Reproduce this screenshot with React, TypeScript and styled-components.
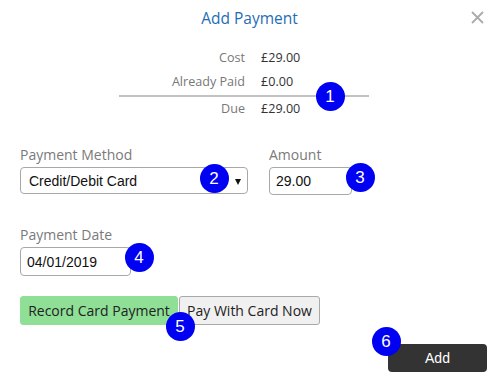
import React from "react";
import styled, { createGlobalStyle } from "styled-components";

const GlobalStyle = createGlobalStyle`
  html, body { margin: 0; padding: 0; background: #ffffff; }
  body { font-family: "Open Sans", "Liberation Sans", sans-serif; }
  * { box-sizing: border-box; }
`;

const Dialog = styled.div`
  position: relative;
  width: 499px;
  height: 382px;
  padding: 8px 12px 0 20px;
  display: flex;
  flex-direction: column;
  background: #ffffff;
`;

const Header = styled.header`
  display: flex;
  justify-content: center;
  margin: 0 -12px 0 -20px;
  height: 20px;
`;

const Title = styled.h2`
  margin: 0;
  font-size: 15.5px;
  line-height: 20px;
  font-weight: 400;
  color: #1f6db5;
`;

const CloseButton = styled.button`
  position: absolute;
  top: 11px;
  right: 15px;
  width: 13px;
  height: 13px;
  padding: 0;
  border: 0;
  background: transparent;
  display: flex;
  cursor: pointer;
`;

const Summary = styled.div`
  position: relative;
  width: 250px;
  margin: 18px 0 0 99px;
`;

const SummaryRow = styled.div`
  display: grid;
  grid-template-columns: 126px 1fr;
  column-gap: 16px;
  font-size: 12.6px;
  line-height: 24px;
`;

const Term = styled.span`
  text-align: right;
  color: #777777;
`;

const Value = styled.span`
  color: #333333;
`;

const Divider = styled.div`
  height: 2px;
  margin-top: 1px;
  background: #c2c2c2;
`;

const Badge = styled.span<{ $x: number; $y: number }>`
  position: absolute;
  left: ${(p) => p.$x}px;
  top: ${(p) => p.$y}px;
  width: 29px;
  height: 29px;
  margin: -14.5px 0 0 -14.5px;
  border-radius: 50%;
  background: #0000f2;
  color: #ffffff;
  font-family: "Liberation Sans", Arial, sans-serif;
  font-size: 17px;
  line-height: 29px;
  text-align: center;
  z-index: 2;
  pointer-events: none;
`;

const FormRow = styled.div<{ $top: number }>`
  display: flex;
  gap: 21px;
  margin-top: ${(p) => p.$top}px;
`;

const Field = styled.div`
  position: relative;
  display: flex;
  flex-direction: column;
  gap: 3px;
`;

const Label = styled.label`
  font-size: 14px;
  line-height: 19px;
  color: #7a7a7a;
`;

const SelectWrap = styled.div`
  position: relative;
  width: 228px;
  height: 27px;

  &::after {
    content: "";
    position: absolute;
    right: 7px;
    top: 12px;
    border-left: 3.5px solid transparent;
    border-right: 3.5px solid transparent;
    border-top: 6px solid #111111;
    pointer-events: none;
  }
`;

const Select = styled.select`
  appearance: none;
  -webkit-appearance: none;
  width: 100%;
  height: 100%;
  margin: 0;
  padding: 0 8px;
  border: 1px solid #a8a8a8;
  border-radius: 4px;
  background: #ffffff;
  color: #111111;
  font-family: "Liberation Sans", Arial, sans-serif;
  font-size: 14px;
`;

const TextInput = styled.input<{ $w: number; $h: number }>`
  width: ${(p) => p.$w}px;
  height: ${(p) => p.$h}px;
  margin: 0;
  padding: 0 6px;
  border: 1px solid #a8a8a8;
  border-radius: 4px;
  background: #ffffff;
  color: #111111;
  font-family: "Liberation Sans", Arial, sans-serif;
  font-size: 14px;
  outline: none;
`;

const ButtonGroup = styled.div`
  position: relative;
  display: flex;
  gap: 1px;
  margin-top: 20px;
`;

const ToggleButton = styled.button<{ $active?: boolean; $w: number }>`
  width: ${(p) => p.$w}px;
  height: 29px;
  margin: 0;
  padding: 0;
  border: 1px solid ${(p) => (p.$active ? "#8fdf97" : "#a9a9a9")};
  border-radius: 3px;
  background: ${(p) => (p.$active ? "#8fdf97" : "#f0f0f0")};
  color: #222222;
  font-family: "Open Sans", "Liberation Sans", sans-serif;
  font-size: 14px;
  line-height: 27px;
  text-align: center;
  white-space: nowrap;
  cursor: pointer;
`;

const Footer = styled.div`
  position: relative;
  display: flex;
  justify-content: flex-end;
  margin-top: 19px;
`;

const AddButton = styled.button`
  width: 99px;
  height: 28px;
  margin: 0;
  padding: 0;
  border: 0;
  border-radius: 4px;
  background: #333333;
  color: #ffffff;
  font-family: "Liberation Sans", Arial, sans-serif;
  font-size: 14px;
  cursor: pointer;
`;

export default function App() {
  return (
    <>
      <GlobalStyle />
      <Dialog>
        <Header>
          <Title>Add Payment</Title>
        </Header>
        <CloseButton aria-label="Close">
          <svg width="13" height="13" viewBox="0 0 13 13">
            <path d="M1 1 L12 12 M12 1 L1 12" stroke="#ababab" strokeWidth="1.8" fill="none" />
          </svg>
        </CloseButton>

        <Summary>
          <SummaryRow>
            <Term>Cost</Term>
            <Value>£29.00</Value>
          </SummaryRow>
          <SummaryRow>
            <Term>Already Paid</Term>
            <Value>£0.00</Value>
          </SummaryRow>
          <Divider />
          <SummaryRow>
            <Term>Due</Term>
            <Value>£29.00</Value>
          </SummaryRow>
          <Badge $x={211} $y={50}>1</Badge>
        </Summary>

        <FormRow $top={24}>
          <Field>
            <Label>Payment Method</Label>
            <SelectWrap>
              <Select defaultValue="card">
                <option value="card">Credit/Debit Card</option>
                <option value="cash">Cash</option>
              </Select>
            </SelectWrap>
            <Badge $x={194} $y={33}>2</Badge>
          </Field>
          <Field>
            <Label>Amount</Label>
            <TextInput $w={83} $h={28} defaultValue="29.00" />
            <Badge $x={91} $y={32}>3</Badge>
          </Field>
        </FormRow>

        <FormRow $top={30}>
          <Field>
            <Label>Payment Date</Label>
            <TextInput $w={111} $h={29} defaultValue="04/01/2019" />
            <Badge $x={119} $y={32}>4</Badge>
          </Field>
        </FormRow>

        <ButtonGroup>
          <ToggleButton $active $w={158}>Record Card Payment</ToggleButton>
          <ToggleButton $w={141}>Pay With Card Now</ToggleButton>
          <Badge $x={160} $y={30}>5</Badge>
        </ButtonGroup>

        <Footer>
          <AddButton>Add</AddButton>
          <Badge $x={366} $y={-3}>6</Badge>
        </Footer>
      </Dialog>
    </>
  );
}
